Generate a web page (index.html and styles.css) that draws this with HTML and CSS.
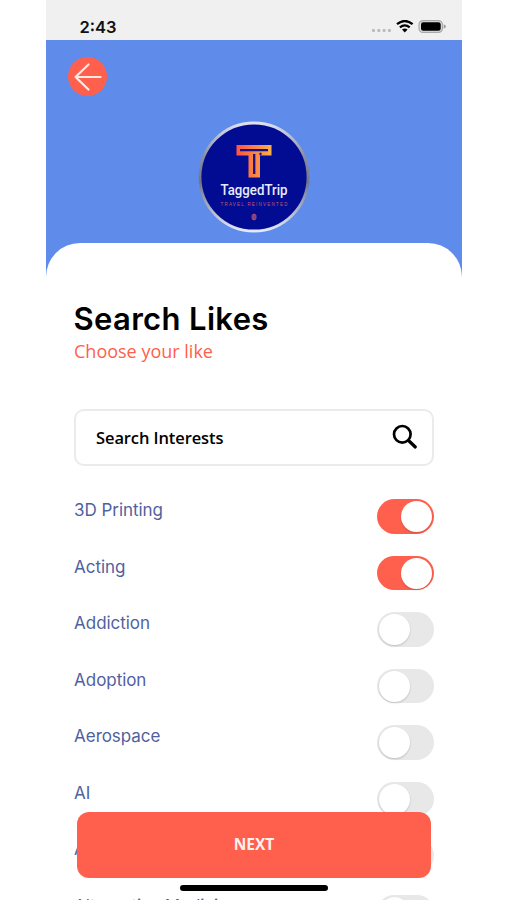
FILE: index.html
```html
<!DOCTYPE html>
<html lang="en">
<head>
<meta charset="utf-8">
<title>Search Likes</title>
<link rel="stylesheet" href="styles.css">
</head>
<body>
<div class="phone">
  <div class="status">
    <span class="time">2:43</span>
    <svg class="indicators" width="76" height="16" viewBox="0 0 76 16">
      <g fill="#bbb"><rect x="1" y="9" width="3" height="3" rx="1"/><rect x="6.300" y="9" width="3" height="3" rx="1"/><rect x="11.600" y="9" width="3" height="3" rx="1"/><rect x="16.900" y="9" width="3" height="3" rx="1"/></g>
      <g transform="translate(.8 0)"><g fill="none" stroke="#000" stroke-width="2.300"><path d="M25.200 4.200Q33 -2.200 40.800 4.200"/><path d="M28.100 7.400Q33 3.400 37.900 7.400"/></g>
      <path d="M30.200 9.600Q33 7.400 35.800 9.600L33 12.500Z"/></g>
      <rect x="48" y="0.600" width="23.400" height="11.800" rx="4" fill="#dedede" stroke="#a9a9a9" stroke-width="1.200"/>
      <rect x="50" y="2.300" width="19.700" height="8.500" rx="2.200"/>
      <path d="M72.700 4.300Q74.900 5 74.900 6.500T72.700 8.700Z" fill="#999"/>
    </svg>
  </div>
  <header class="hero">
    <button class="back" aria-label="Back">
      <svg width="39" height="39" viewBox="0 0 39 39" fill="none" stroke="#ffe9e5" stroke-width="2.200" stroke-linecap="round" stroke-linejoin="round"><path d="M32.500 20H7.500M20.500 7.500L7.500 20L20.500 32.500"/></svg>
    </button>
    <svg class="logo" width="112" height="112" viewBox="0 0 112 112">
      <defs>
        <linearGradient id="ring" x1="0" y1="0" x2="0" y2="1"><stop offset="0" stop-color="#dde2f0"/><stop offset=".3" stop-color="#8b8fa3"/><stop offset=".55" stop-color="#70758c"/><stop offset=".8" stop-color="#aeb4c8"/><stop offset="1" stop-color="#e4e9f6"/></linearGradient>
        <linearGradient id="flame"><stop offset="0" stop-color="#ff5341"/><stop offset="1" stop-color="#f9b04b"/></linearGradient>
      </defs>
      <circle cx="56" cy="56" r="54" fill="#020c92" stroke="url(#ring)" stroke-width="2.800"/>
      <path d="M38.500 24H73.500V34.500H62V56.500H50.500V34.500H38.500Z" fill="url(#flame)"/>
      <path d="M42 29.200H70M56.200 33V53M61.500 33H63.500" fill="none" stroke="#17127f" stroke-width="2.300"/>
      <text class="logo-name" x="56" y="74" text-anchor="middle" textLength="67" lengthAdjust="spacingAndGlyphs">TaggedTrip</text>
      <text class="logo-tag" x="22.500" y="85" textLength="67">TRAVEL REINVENTED</text>
      <ellipse cx="56" cy="96" rx="2.500" ry="3.200" fill="#a34e79"/>
      <path d="M54 95H58M54 97H58" stroke="#4a2984" stroke-width=".6"/>
    </svg>
  </header>
  <main class="sheet">
    <h1>Search Likes</h1>
    <p class="subtitle">Choose your like</p>
    <div class="search">
      <span>Search Interests</span>
      <svg width="26" height="26" viewBox="0 0 26 26" fill="none" stroke="#000" stroke-width="2.700" stroke-linecap="round"><circle cx="10.300" cy="10.300" r="8.300"/><path d="M16.500 16.500L23.300 23" stroke-width="3.200"/></svg>
    </div>
    <ul class="likes">
      <li><span>3D Printing</span><i class="toggle on"></i></li>
      <li><span>Acting</span><i class="toggle on"></i></li>
      <li><span>Addiction</span><i class="toggle"></i></li>
      <li><span>Adoption</span><i class="toggle"></i></li>
      <li><span>Aerospace</span><i class="toggle"></i></li>
      <li><span>AI</span><i class="toggle"></i></li>
      <li><span>Alcohol</span><i class="toggle"></i></li>
      <li><span>Alternative Medicine</span><i class="toggle"></i></li>
    </ul>
  </main>
  <button class="next">NEXT</button>
  <div class="home-bar"></div>
</div>
</body>
</html>
```
FILE: styles.css
```css
* { box-sizing: border-box; }
body { margin: 0; background: #fff; font-family: Inter, "Liberation Sans", sans-serif; }
button { border: 0; padding: 0; font: inherit; }
.phone { position: relative; width: 415.5px; height: 900px; margin-left: 46px; overflow: hidden; background: #fff; }
.status { height: 40px; display: flex; justify-content: space-between; align-items: flex-start; padding: 15px 15px 0 33.5px; background: #f0f0f0; }
.time { font-size: 16.5px; line-height: 24px; font-weight: 600; color: #111; }
.indicators { margin-top: 5px; flex: none; }
.hero { height: 240px; display: flex; background: #5f8bea; }
.back { width: 39px; height: 39px; margin: 16.5px 0 0 22px; border-radius: 50%; background: #ff604d; flex: none; }
.back svg { display: block; }
.logo { margin: 81px 0 0 91px; flex: none; }
.logo-name { font: 500 14px Roboto, sans-serif; fill: #e9ebfa; }
.logo-tag { font: 4.5px "Liberation Sans", sans-serif; fill: #c0566f; }
.sheet { position: relative; height: 660px; margin-top: -37px; padding: 57px 27.5px 0; border-radius: 34px 34px 0 0; background: #fff; }
h1 { margin: 0; font-size: 31px; line-height: 38px; font-weight: 600; letter-spacing: 0.35px; color: #000; white-space: nowrap; }
.subtitle { margin: 0 0 0 .5px; font: 18px/26px "Open Sans", sans-serif; color: #ff604d; }
.search { height: 57px; margin-top: 45px; display: flex; align-items: center; justify-content: space-between; padding: 0 14px 2px 20.5px; border: 2px solid #ebebeb; border-radius: 10px; font: 600 16.5px "Open Sans", sans-serif; letter-spacing: -.1px; color: #000; }
.search span { padding-top: 2px; }
.likes { list-style: none; margin: 33px 0 0; padding: 0; }
.likes li { height: 56.5px; display: flex; justify-content: space-between; align-items: flex-start; }
.likes span { padding-left: .6px; font-size: 17px; line-height: 23px; letter-spacing: -.05px; color: #50619f; }
.toggle { width: 57px; height: 34.5px; padding: 2px; display: flex; border-radius: 18px; background: #e8e8e8; }
.toggle::before { content: ""; width: 31px; height: 31px; border-radius: 50%; background: #fff; box-shadow: 0 1px 2px rgba(0,0,0,.18); }
.toggle.on { justify-content: flex-end; background: #ff604d; }
.next { position: absolute; left: 31px; top: 811.5px; width: 354px; height: 66.5px; padding-bottom: 2px; border-radius: 12px; background: #ff604d; color: #fff2ee; font: 700 15.5px "Open Sans", sans-serif; }
.home-bar { position: absolute; left: 134px; top: 885px; width: 148px; height: 6px; border-radius: 3px; background: #000; }
```
